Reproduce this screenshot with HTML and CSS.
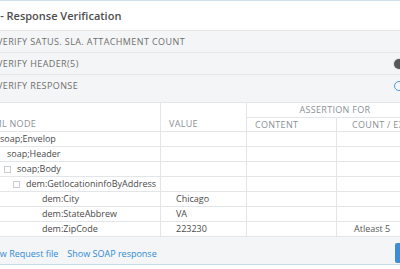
FILE: index.html
```html
<!DOCTYPE html>
<html lang="en">
<head>
  <meta charset="UTF-8">
  <meta name="viewport" content="width=device-width, initial-scale=1.0">
  <title>Response Verification</title>
  <link rel="stylesheet" href="styles.css">
</head>
<body>
  <div class="panel">
    <div class="panel-head">
      <h2 class="panel-title">3 - Response Verification</h2>
    </div>

    <div class="panel-body">
      <div class="check-row">
        <span>Verify Satus. SLA. Attachment Count</span>
      </div>
      <div class="check-row">
        <span>Verify Header(5)</span>
        <span class="check-tool"><span class="toggle"><span class="knob"></span></span></span>
      </div>
      <div class="check-row last">
        <span>Verify Response</span>
        <span class="check-tool"><span class="ring"></span></span>
      </div>

      <div class="table-wrap">
        <table class="xml-table">
          <colgroup>
            <col class="col-node">
            <col class="col-value">
            <col class="col-content">
            <col class="col-count">
          </colgroup>
          <thead>
            <tr>
              <th rowspan="2" class="th-node">XML Node</th>
              <th rowspan="2" class="th-value">Value</th>
              <th colspan="2" class="th-group">Assertion For</th>
            </tr>
            <tr>
              <th class="th-content">Content</th>
              <th class="th-count">Count / Existence</th>
            </tr>
          </thead>
          <tbody>
            <tr>
              <td class="tree d0"><span class="cb"></span>soap;Envelop</td>
              <td class="val"></td><td></td><td></td>
            </tr>
            <tr>
              <td class="tree d1 leaf">soap;Header</td>
              <td class="val"></td><td></td><td></td>
            </tr>
            <tr>
              <td class="tree d1"><span class="cb"></span>soap;Body</td>
              <td class="val"></td><td></td><td></td>
            </tr>
            <tr>
              <td class="tree d2"><span class="cb"></span>dem:GetlocationinfoByAddress</td>
              <td class="val"></td><td></td><td></td>
            </tr>
            <tr>
              <td class="tree d3 leaf">dem:City</td>
              <td class="val">Chicago</td><td></td><td></td>
            </tr>
            <tr>
              <td class="tree d3 leaf">dem:StateAbbrew</td>
              <td class="val">VA</td><td></td><td></td>
            </tr>
            <tr>
              <td class="tree d3 leaf">dem:ZipCode</td>
              <td class="val">223230</td><td></td><td class="count">Atleast 5</td>
            </tr>
          </tbody>
        </table>
      </div>
    </div>

    <div class="panel-foot">
      <a href="#" class="foot-link">Show Request file</a>
      <a href="#" class="foot-link">Show SOAP response</a>
      <button type="button" class="btn-next">Next</button>
    </div>
  </div>
</body>
</html>
```

FILE: styles.css
```css
body {
  margin: 0;
  background-color: #fff;
  font-family: "Open Sans", "DejaVu Sans", sans-serif;
  overflow: hidden;
}

.panel {
  width: 460px;
  margin-left: -24px;
  border-top: 1px solid #cfe0ec;
  border-bottom: 1px solid #c6dbea;
  background-color: #f4f5f6;
}

.panel-head {
  height: 29px;
  display: flex;
  align-items: center;
  padding-left: 15px;
  background-color: #fff;
  border-bottom: 1px solid #e4e6e8;
}

.panel-title {
  margin: 0;
  font-size: 11px;
  font-weight: 600;
  color: #4e4e4e;
}

.check-row {
  height: 21px;
  display: flex;
  align-items: center;
  justify-content: space-between;
  padding: 0 7px 0 21px;
  border-bottom: 1px solid #e6e7e8;
  font-size: 9px;
  letter-spacing: 0.4px;
  text-transform: uppercase;
  color: #6e6e6e;
}

.check-row.last {
  border-bottom: none;
}

.check-tool {
  width: 36px;
  display: flex;
  align-items: center;
}

.toggle {
  width: 26px;
  height: 12px;
  border-radius: 6px;
  background-color: #dedfe0;
  display: flex;
  align-items: center;
  padding-left: 1px;
}

.knob {
  width: 10px;
  height: 10px;
  border-radius: 50%;
  background-color: #575757;
}

.ring {
  width: 8px;
  height: 8px;
  border: 1.5px solid #4a9be0;
  border-radius: 50%;
  margin-left: 1px;
}

.table-wrap {
  padding-top: 6px;
}

.xml-table {
  width: 100%;
  table-layout: fixed;
  border-collapse: collapse;
  background-color: #fff;
}

.col-node { width: 184px; }
.col-value { width: 86px; }
.col-content { width: 90px; }

.xml-table th,
.xml-table td {
  border: 1px solid #e3e6e9;
  padding: 0;
  height: 14px;
  line-height: 14px;
  white-space: nowrap;
  overflow: hidden;
}

.xml-table th {
  font-size: 9px;
  font-weight: 400;
  letter-spacing: 0.3px;
  text-transform: uppercase;
  color: #8a9198;
  text-align: left;
}

.th-node {
  vertical-align: bottom;
  padding-left: 11px !important;
}

.th-value {
  vertical-align: bottom;
  padding-left: 8px !important;
}

.th-group {
  text-align: center !important;
  padding-right: 12px !important;
}

.xml-table thead tr:last-child th {
  height: 13px;
  line-height: 13px;
}

.th-content {
  padding-left: 8px !important;
}

.th-count {
  padding-left: 15px !important;
}

.xml-table td {
  font-size: 9px;
  color: #4a4a4a;
}

.tree.d0 { padding-left: 10px; }
.tree.d1 { padding-left: 27px; }
.tree.d1.leaf { padding-left: 30px; }
.tree.d2 { padding-left: 36px; }
.tree.d3.leaf { padding-left: 65px; }

.cb {
  display: inline-block;
  width: 5px;
  height: 5px;
  border: 1px solid #c9ccd0;
  margin-right: 6px;
  vertical-align: -1px;
}

.xml-table td.val {
  padding-left: 15px;
}

.xml-table td.count {
  padding-left: 17px;
  color: #555;
}

.panel-foot {
  display: flex;
  align-items: center;
  gap: 9px;
  padding: 6px 7px 1px 8px;
}

.foot-link {
  font-size: 9px;
  color: #2f8bd6;
  text-decoration: none;
}

.btn-next {
  margin-left: auto;
  width: 34px;
  height: 20px;
  border: none;
  border-radius: 2px;
  background-color: #3b8fd6;
  color: #fff;
  font-family: inherit;
  font-size: 9px;
  padding: 0 0 0 12px;
  text-align: left;
}
```
